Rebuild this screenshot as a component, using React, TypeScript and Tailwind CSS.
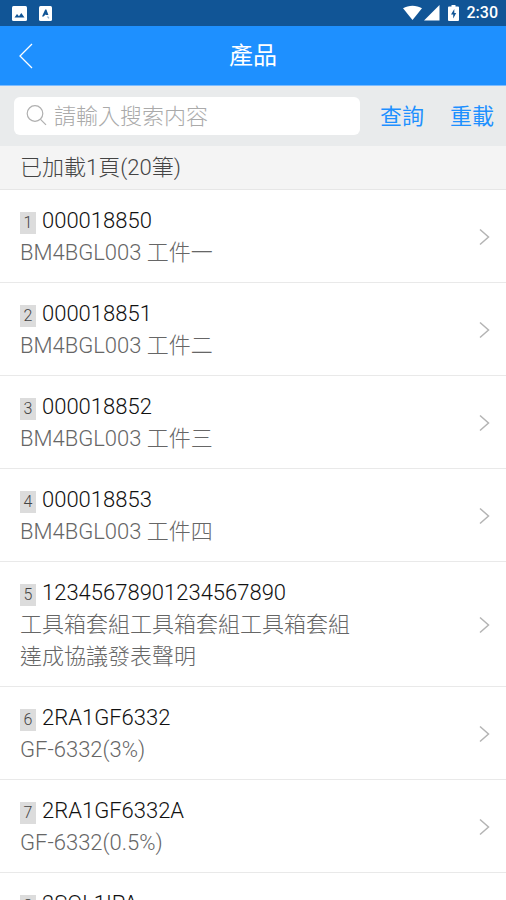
import React from "react";

type Product = { code: string; description: string };

const products: Product[] = [
  { code: "000018850", description: "BM4BGL003 工件一" },
  { code: "000018851", description: "BM4BGL003 工件二" },
  { code: "000018852", description: "BM4BGL003 工件三" },
  { code: "000018853", description: "BM4BGL003 工件四" },
  { code: "12345678901234567890", description: "工具箱套組工具箱套組工具箱套組\n達成協議發表聲明" },
  { code: "2RA1GF6332", description: "GF-6332(3%)" },
  { code: "2RA1GF6332A", description: "GF-6332(0.5%)" },
  { code: "2SOL1IPA", description: "IPA" },
];

function StatusBar() {
  return (
    <div className="flex h-[26px] shrink-0 items-center justify-between bg-[#115596] pl-3 pr-2 text-white">
      <div className="flex items-center gap-3">
        <svg className="h-[15px] w-[15px]" viewBox="0 0 15 15" aria-hidden="true">
          <rect width="15" height="15" rx="1.5" fill="#fff" />
          <path d="M2.5 11.5 5 8l2 2.3L9.3 7l3.2 4.5z" fill="#115596" />
        </svg>
        <svg className="h-[15px] w-[13px]" viewBox="0 0 13 15" aria-hidden="true">
          <rect width="13" height="15" rx="1.5" fill="#fff" />
          <path d="M3 10.5 6.2 3.5h1.2l2 5.500H7.200L6.500 8.500 4.600 10.500z" fill="#115596" />
          <path d="m8.5 10.500 1.5 1.8" stroke="#8fb1d2" strokeWidth="1.2" />
        </svg>
      </div>
      <div className="flex items-center">
        <svg className="h-4 w-[19px]" viewBox="0 0 19 16" fill="#fff" aria-hidden="true">
          <path d="M0 3.2C5.5-.2 13.5-.2 19 3.2L9.5 15z" />
        </svg>
        <svg className="ml-[2px] h-4 w-4" viewBox="0 0 16 16" fill="#fff" aria-hidden="true">
          <path d="M15.500 0v15.500H0z" />
        </svg>
        <svg className="ml-2 h-4 w-[11px]" viewBox="0 0 11 16" aria-hidden="true">
          <path d="M3.5 0h4v1.500H10a1 1 0 0 1 1 1V15a1 1 0 0 1-1 1H1a1 1 0 0 1-1-1V2.500a1 1 0 0 1 1-1h2.500z" fill="#fff" />
          <path d="M6.300 4 3 9.500h2.200V13.500L8.200 8H6.300z" fill="#115596" />
        </svg>
        <span className="ml-2 text-base leading-none font-medium">2:30</span>
      </div>
    </div>
  );
}

function ProductRow({ index, product }: { index: number; product: Product }) {
  return (
    <li className="border-b border-[#e9e9e9]">
      <a href={`#product-${index}`} className="flex items-center justify-between pt-[15px] pr-4 pb-[13px] pl-5">
        <div className="text-[22px] leading-8 font-light">
          <div className="flex items-center gap-[6px] text-[#111]">
            <span className="mt-1 flex h-[22px] w-4 items-center justify-center bg-[#dcdcdc] text-base text-[#444]">
              {index}
            </span>
            <span>{product.code}</span>
          </div>
          <div className="whitespace-pre-line text-[#666]">{product.description}</div>
        </div>
        <svg className="h-[18px] w-[11px] shrink-0" viewBox="0 0 11 18" fill="none" stroke="#b4b4b4" strokeWidth="1.5" aria-hidden="true">
          <path d="m1 1.500 8.500 7.500L1 16.500" />
        </svg>
      </a>
    </li>
  );
}

export default function App() {
  return (
    <div className="flex h-screen flex-col overflow-hidden bg-white font-[Roboto,'Noto_Sans_CJK_TC',sans-serif]">
      <StatusBar />
      <header className="grid h-[60px] shrink-0 grid-cols-[1fr_auto_1fr] items-center border-b border-[#7dbcff] bg-[#1e90ff] px-[18px] text-white">
        <button type="button" aria-label="返回" className="justify-self-start">
          <svg className="h-[26px] w-4" viewBox="0 0 16 26" fill="none" stroke="#fff" strokeWidth="1.3" aria-hidden="true">
            <path d="M14 1 2 13l12 12" />
          </svg>
        </button>
        <h1 className="text-2xl leading-8">產品</h1>
      </header>
      <form className="flex h-[60px] shrink-0 items-center bg-[#e9ebec] pr-3 pl-[14px] text-[22px]">
        <label className="flex h-[38px] min-w-0 flex-1 items-center gap-[6px] rounded-md bg-white pl-3">
          <svg className="h-[22px] w-[22px] shrink-0" viewBox="0 0 22 22" fill="none" stroke="#b0b0b0" strokeWidth="1.2" aria-hidden="true">
            <circle cx="9" cy="8.5" r="7.8" />
            <path d="m14.500 14.300 5.500 5.500" />
          </svg>
          <input
            type="text"
            aria-label="搜索"
            placeholder="請輸入搜索内容"
            className="h-8 w-full min-w-0 font-light outline-none placeholder:text-[#aaa]"
          />
        </label>
        <div className="ml-5 flex gap-[26px] text-[#1e90ff]">
          <button type="button">查詢</button>
          <button type="button">重載</button>
        </div>
      </form>
      <div className="h-11 shrink-0 border-b border-[#e6e6e6] bg-[#f4f4f4] px-5 text-[22px] leading-[44px] font-light text-[#444]">
        已加載1頁(20筆)
      </div>
      <ul className="min-h-0 flex-1 overflow-y-auto [scrollbar-width:none]">
        {products.map((product, i) => (
          <ProductRow key={product.code} index={i + 1} product={product} />
        ))}
      </ul>
    </div>
  );
}
